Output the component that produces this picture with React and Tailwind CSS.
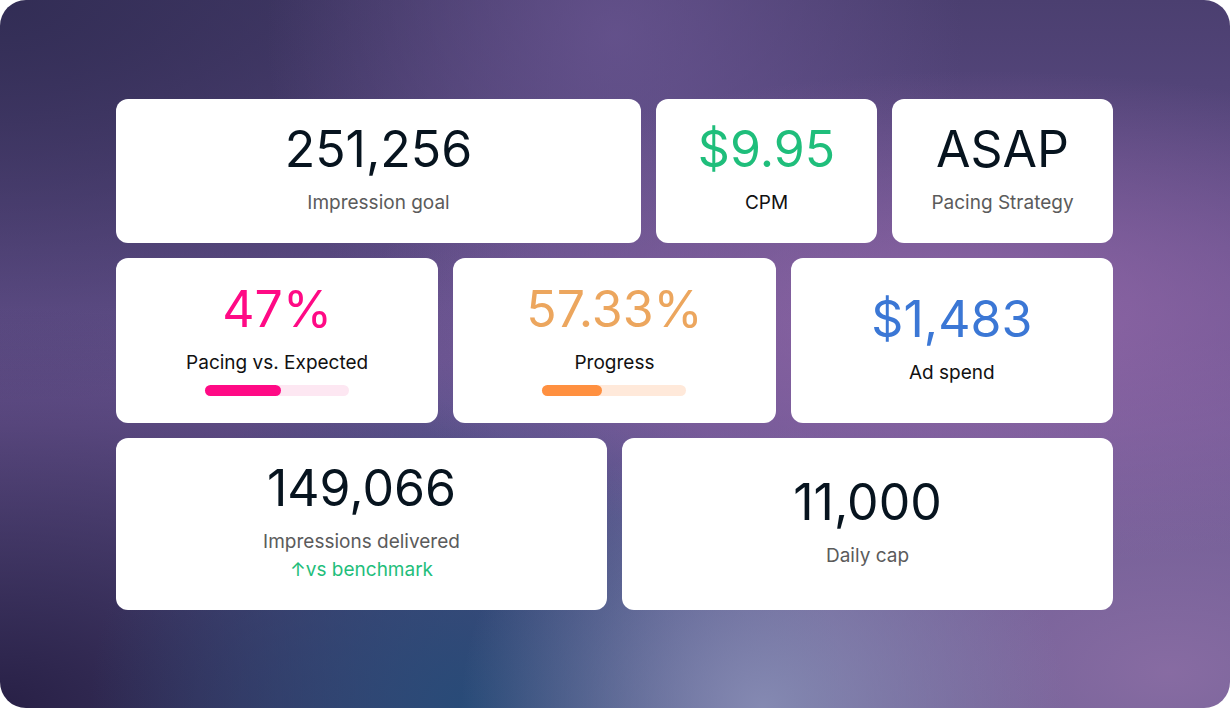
import React from "react";

function Bar({ fill, track, pct }) {
  return (
    <div className={`mt-[8px] h-[11px] w-[144px] rounded-full ${track}`}>
      <div className={`h-full rounded-full ${fill}`} style={{ width: `${pct}%` }} />
    </div>
  );
}

function Card({ value, valueClass = "text-[#07141f]", label, labelClass = "text-[#5b5b5b]", children }) {
  return (
    <div className="flex flex-col items-center justify-center rounded-xl bg-white">
      <div className={`text-[50px] leading-[48px] ${valueClass}`}>{value}</div>
      <div className={`mt-[16px] text-[19px] leading-[28px] ${labelClass}`}>{label}</div>
      {children}
    </div>
  );
}

export default function App() {
  return (
    <div className="w-[1230px] h-[708px] bg-white" style={{ fontFamily: "Inter, 'Noto Sans', sans-serif" }}>
      <div className="h-full w-full overflow-hidden rounded-[26px] bg-[radial-gradient(ellipse_at_80%_45%,rgba(150,105,170,0.85),transparent_45%),radial-gradient(ellipse_at_62%_100%,rgba(135,140,180,0.95),transparent_28%),radial-gradient(ellipse_at_38%_100%,rgba(40,75,120,1),transparent_35%),radial-gradient(ellipse_at_95%_95%,rgba(140,110,165,0.9),transparent_35%),radial-gradient(ellipse_at_0%_100%,rgba(40,32,70,1),transparent_40%),radial-gradient(ellipse_at_50%_5%,rgba(105,85,145,0.8),transparent_40%),radial-gradient(ellipse_at_0%_0%,rgba(50,45,85,1),transparent_40%),linear-gradient(180deg,#4b3f70_0%,#604e88_35%,#6a5592_60%,#5a5488_100%)] pl-[116px] pr-[117px] pt-[99px]">
        <div className="flex flex-col gap-[15px]">
          <div className="grid h-[144px] grid-cols-[1fr_221px_221px] gap-[15px]">
            <Card value="251,256" label="Impression goal" />
            <Card value="$9.95" valueClass="text-[#1fbe7b]" label="CPM" labelClass="text-[#111111]" />
            <Card value="ASAP" label="Pacing Strategy" />
          </div>
          <div className="grid h-[165px] grid-cols-3 gap-[15px]">
            <Card value="47%" valueClass="text-[#ff0a85]" label="Pacing vs. Expected" labelClass="text-[#111111]">
              <Bar fill="bg-[#ff0a85]" track="bg-[#fde7f2]" pct={53} />
            </Card>
            <Card value="57.33%" valueClass="text-[#eca65e]" label="Progress" labelClass="text-[#111111]">
              <Bar fill="bg-[#ff9040]" track="bg-[#ffe9da]" pct={41} />
            </Card>
            <Card value="$1,483" valueClass="text-[#3b77d5]" label="Ad spend" labelClass="text-[#111111]" />
          </div>
          <div className="grid h-[172px] grid-cols-2 gap-[15px]">
            <Card value="149,066" label="Impressions delivered">
              <div className="text-[19px] leading-[28px] text-[#1fbe7b]">↑vs benchmark</div>
            </Card>
            <Card value="11,000" label="Daily cap" />
          </div>
        </div>
      </div>
    </div>
  );
}
